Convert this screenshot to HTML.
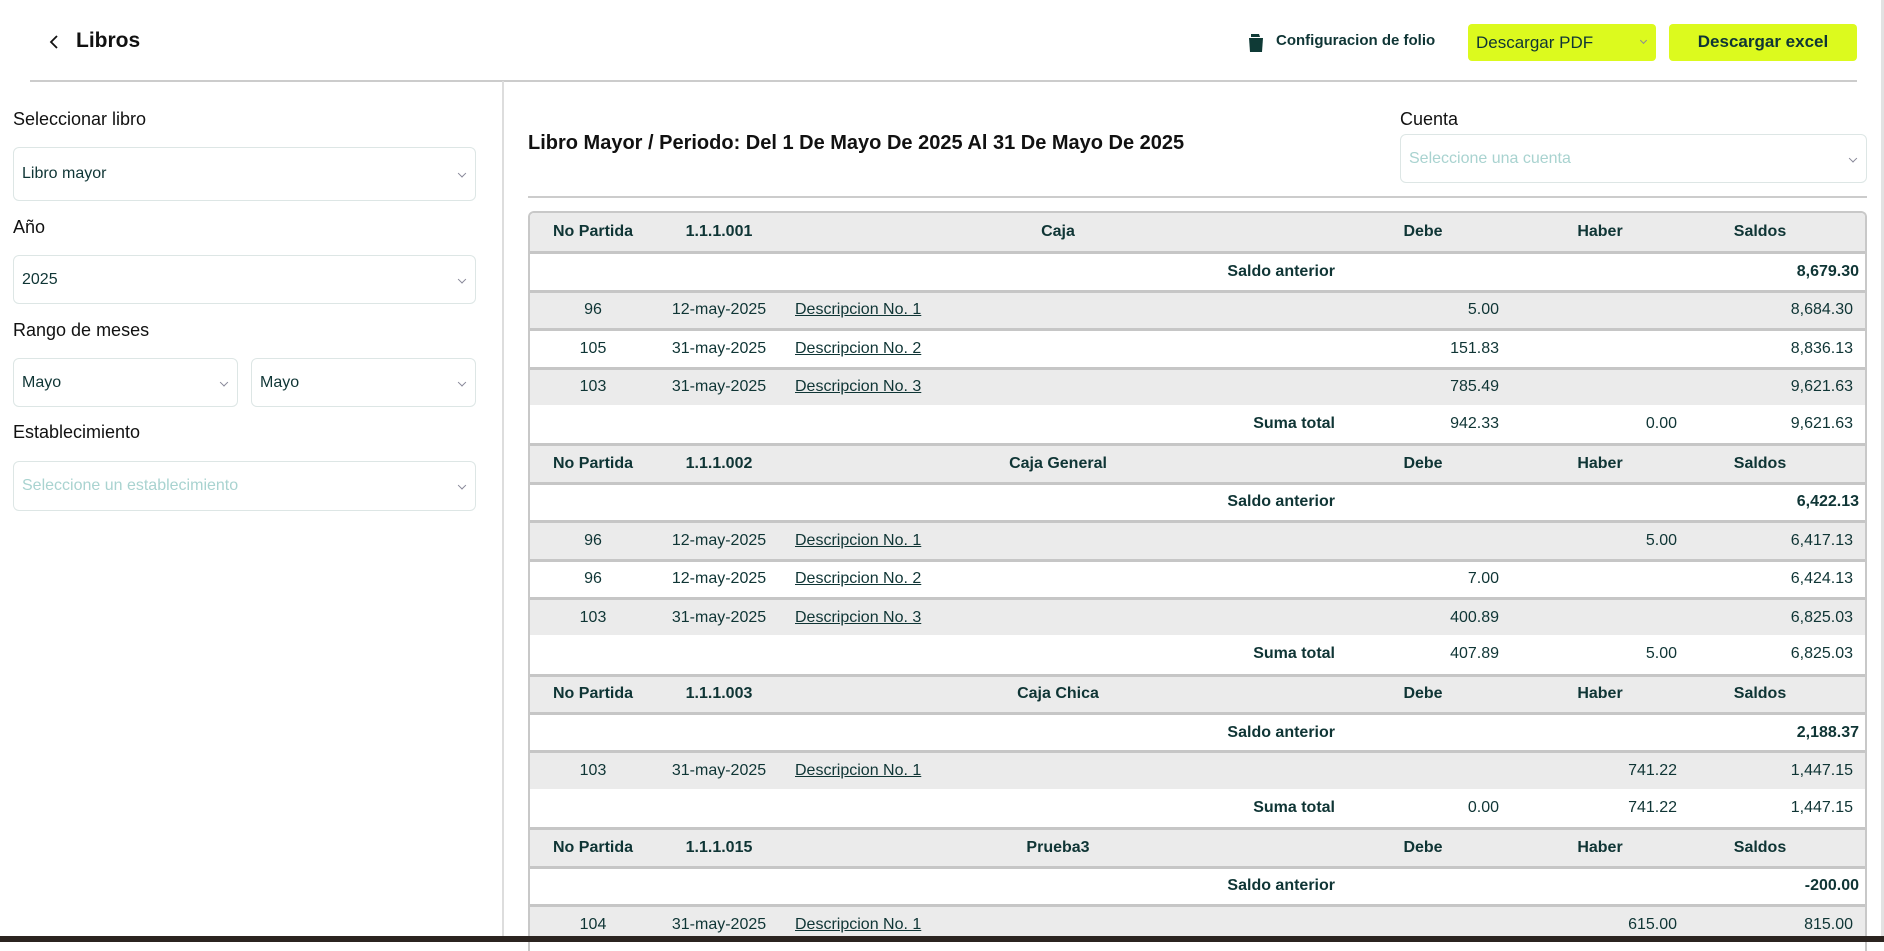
<!DOCTYPE html>
<html><head><meta charset="utf-8"><style>
*{box-sizing:border-box;margin:0;padding:0}
body{width:1884px;height:942px;overflow:hidden;background:#fff;font-family:"Liberation Sans",sans-serif;color:#0f3535;position:relative}
.a{position:absolute;white-space:nowrap}
.lbl{font-size:18px;color:#111}
.sel{position:absolute;border:1.5px solid #dde6e5;border-radius:6px;background:#fff;font-size:16px;color:#0f3535;padding-left:8px;display:flex;align-items:center}
.sel::after{content:"";position:absolute;right:10px;top:50%;width:5px;height:5px;border-right:1px solid #889;border-bottom:1px solid #889;transform:translateY(-60%) rotate(45deg)}
.ph{color:#a9d3d0}
.tbl{position:absolute;left:528px;top:211px;width:1339px;height:740px;border:2px solid #c8c8c8;border-bottom:none;border-radius:6px 6px 0 0;overflow:hidden}
.r{position:relative;height:38.4px;border-top:3px solid #c6c6c6;font-size:16px}
.r:first-child{border-top:none}
.g{background:#ebebeb}
.s{border-top:none}
.r span{position:absolute;top:50%;transform:translateY(-50%);white-space:nowrap}
.b{font-weight:bold}
.c{transform:translate(-50%,-50%)!important}
u{text-decoration:underline}
</style></head><body>
<svg class="a" style="left:48px;top:34px" width="12" height="16" viewBox="0 0 12 16"><path d="M9 2 L3 8 L9 14" fill="none" stroke="#111" stroke-width="1.8"/></svg>
<div class="a" style="left:76px;top:29px;font-size:21px;font-weight:bold;color:#111">Libros</div>
<svg class="a" style="left:1247px;top:33px" width="18" height="20" viewBox="0 0 18 20"><path d="M4 1h8l1 3H4z" fill="#0f3a36"/><path d="M2 5h14l-1 14H3z" fill="#0f3a36"/></svg>
<div class="a" style="left:1276px;top:32px;font-size:15px;font-weight:bold">Configuracion de folio</div>
<div class="a" style="left:1468px;top:24px;width:188px;height:37px;background:#dcfa1e;border-radius:4px;font-size:17px;padding:9px 0 0 8px">Descargar PDF<span style="position:absolute;right:10px;top:14px;width:5px;height:5px;border-right:1px solid #889;border-bottom:1px solid #889;transform:rotate(45deg)"></span></div>
<div class="a" style="left:1669px;top:24px;width:188px;height:37px;background:#dcfa1e;border-radius:4px;font-size:17px;font-weight:bold;text-align:center;padding-top:8px">Descargar excel</div>
<div class="a" style="left:30px;top:80px;width:1827px;height:1.5px;background:#ccc"></div>
<div class="a" style="left:502px;top:81px;width:1.5px;height:861px;background:#ddd"></div>
<div class="a" style="left:1881px;top:0;width:3px;height:942px;background:#e2e2e2"></div>

<div class="a lbl" style="left:13px;top:109px">Seleccionar libro</div>
<div class="sel" style="left:13px;top:147px;width:463px;height:54px">Libro mayor</div>
<div class="a lbl" style="left:13px;top:217px">Año</div>
<div class="sel" style="left:13px;top:255px;width:463px;height:49px">2025</div>
<div class="a lbl" style="left:13px;top:320px">Rango de meses</div>
<div class="sel" style="left:13px;top:358px;width:225px;height:49px">Mayo</div>
<div class="sel" style="left:251px;top:358px;width:225px;height:49px">Mayo</div>
<div class="a lbl" style="left:13px;top:422px">Establecimiento</div>
<div class="sel" style="left:13px;top:461px;width:463px;height:50px"><span class="ph">Seleccione un establecimiento</span></div>

<div class="a" style="left:528px;top:132px;font-size:20px;font-weight:bold;color:#111">Libro Mayor / Periodo: Del 1 De Mayo De 2025 Al 31 De Mayo De 2025</div>
<div class="a lbl" style="left:1400px;top:109px">Cuenta</div>
<div class="sel" style="left:1400px;top:134px;width:467px;height:49px"><span class="ph">Seleccione una cuenta</span></div>
<div class="a" style="left:528px;top:196px;width:1339px;height:1.5px;background:#ccc"></div>

<div class="tbl" id="t"></div>
<div class="a" style="left:0;top:936px;width:1884px;height:6px;background:#2b2420"></div>
<script>
const L=528+2, RR=1867-2;
function H(code,name){return `<div class="r g b"><span class="c" style="left:${593-L}px">No Partida</span><span class="c" style="left:${719-L}px">${code}</span><span class="c" style="left:${1058-L}px">${name}</span><span class="c" style="left:${1423-L}px">Debe</span><span class="c" style="left:${1600-L}px">Haber</span><span class="c" style="left:${1760-L}px">Saldos</span></div>`}
function S(v){return `<div class="r b"><span style="right:${RR-1335}px">Saldo anterior</span><span style="right:${RR-1859}px">${v}</span></div>`}
function R(g,n,d,desc,de,ha,sa){return `<div class="r${g?' g':''}"><span class="c" style="left:${593-L}px">${n}</span><span class="c" style="left:${719-L}px">${d}</span><span style="left:${795-L}px"><u>${desc}</u></span><span style="right:${RR-1499}px">${de}</span><span style="right:${RR-1677}px">${ha}</span><span style="right:${RR-1853}px">${sa}</span></div>`}
function T(de,ha,sa){return `<div class="r s"><span class="b" style="right:${RR-1335}px">Suma total</span><span style="right:${RR-1499}px">${de}</span><span style="right:${RR-1677}px">${ha}</span><span style="right:${RR-1853}px">${sa}</span></div>`}
document.getElementById('t').innerHTML=
H('1.1.1.001','Caja')+S('8,679.30')+R(1,'96','12-may-2025','Descripcion No. 1','5.00','','8,684.30')+R(0,'105','31-may-2025','Descripcion No. 2','151.83','','8,836.13')+R(1,'103','31-may-2025','Descripcion No. 3','785.49','','9,621.63')+T('942.33','0.00','9,621.63')+
H('1.1.1.002','Caja General')+S('6,422.13')+R(1,'96','12-may-2025','Descripcion No. 1','','5.00','6,417.13')+R(0,'96','12-may-2025','Descripcion No. 2','7.00','','6,424.13')+R(1,'103','31-may-2025','Descripcion No. 3','400.89','','6,825.03')+T('407.89','5.00','6,825.03')+
H('1.1.1.003','Caja Chica')+S('2,188.37')+R(1,'103','31-may-2025','Descripcion No. 1','','741.22','1,447.15')+T('0.00','741.22','1,447.15')+
H('1.1.1.015','Prueba3')+S('-200.00')+R(1,'104','31-may-2025','Descripcion No. 1','','615.00','815.00');
</script>
</body></html>
